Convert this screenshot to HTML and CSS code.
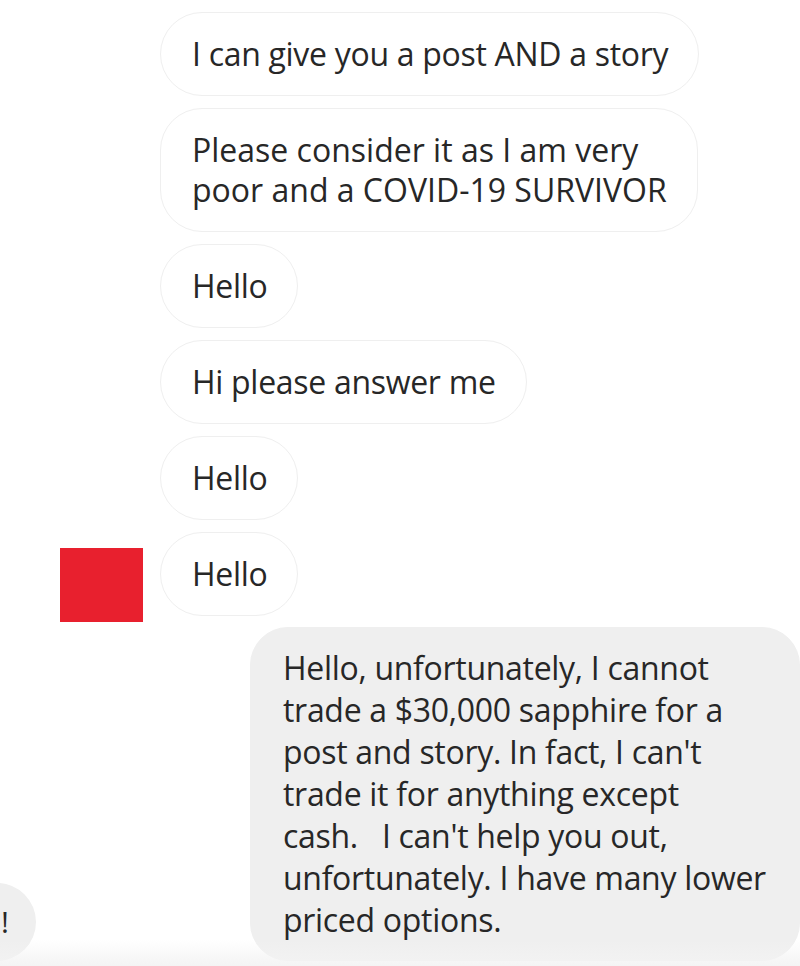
FILE: index.html
```html
<!DOCTYPE html>
<html>
<head>
<meta charset="utf-8">
<link rel="stylesheet" href="styles.css">
</head>
<body>
<div class="chat">
  <div class="incoming">
    <div class="bubble ghost"></div>
    <div class="bubble">I can give you a post AND a story</div>
    <div class="bubble wide">Please consider it as I am very<br>poor and a COVID-19 SURVIVOR</div>
    <div class="bubble">Hello</div>
    <div class="bubble">Hi please answer me</div>
    <div class="bubble">Hello</div>
    <div class="last-row">
      <div class="avatar"></div>
      <div class="bubble">Hello</div>
    </div>
  </div>
  <div class="outgoing-row">
    <div class="side-bubble">!</div>
    <div class="bubble out">Hello, unfortunately, I cannot<br>trade a $30,000 sapphire for a<br>post and story. In fact, I can't<br>trade it for anything except<br>cash.&nbsp;&nbsp; I can't help you out,<br>unfortunately. I have many lower<br>priced options.</div>
  </div>
  <div class="fade"></div>
</div>
</body>
</html>
```

FILE: styles.css
```css
html, body {
  margin: 0;
  padding: 0;
  background: #ffffff;
}
body {
  width: 800px;
  height: 966px;
  overflow: hidden;
  font-family: "Open Sans", "Noto Sans", sans-serif;
  color: #272727;
}
.chat {
  position: relative;
  height: 966px;
  overflow: hidden;
}
.incoming {
  display: flex;
  flex-direction: column;
  align-items: flex-start;
  gap: 12px;
  padding-left: 160px;
}
.bubble {
  box-sizing: border-box;
  border: 1.5px solid #efefef;
  border-radius: 42px;
  padding: 21px 30px 21px 31px;
  font-size: 32px;
  line-height: 40px;
  letter-spacing: -0.3px;
  white-space: nowrap;
  background: #fff;
}
.wide {
  letter-spacing: 0px;
}
.ghost {
  width: 520px;
  height: 84px;
  margin-top: -84px;
  margin-left: 10px;
}
.last-row {
  display: flex;
  align-items: flex-start;
  margin-left: -100px;
  gap: 17px;
}
.avatar {
  width: 83px;
  height: 74px;
  background: #e8202e;
  margin-top: 16px;
}
.outgoing-row {
  display: flex;
  align-items: flex-start;
  margin-top: 5px;
}
.side-bubble {
  width: 80px;
  height: 78px;
  margin-left: -44px;
  margin-top: 256px;
  border-radius: 40px;
  background: #efefef;
  font-size: 30px;
  line-height: 78px;
  text-align: right;
  padding-right: 27px;
  box-sizing: border-box;
  flex-shrink: 0;
}
.out {
  margin-left: 214px;
  width: 550px;
  background: #efefef;
  border-color: #efefef;
  border-radius: 38px;
  padding: 19px 20px 19px 32px;
  line-height: 42px;
}
.fade {
  position: absolute;
  left: 0;
  right: 0;
  bottom: 0;
  height: 26px;
  background: linear-gradient(to bottom, rgba(245,245,245,0), rgba(243,243,243,0.95));
}
```
